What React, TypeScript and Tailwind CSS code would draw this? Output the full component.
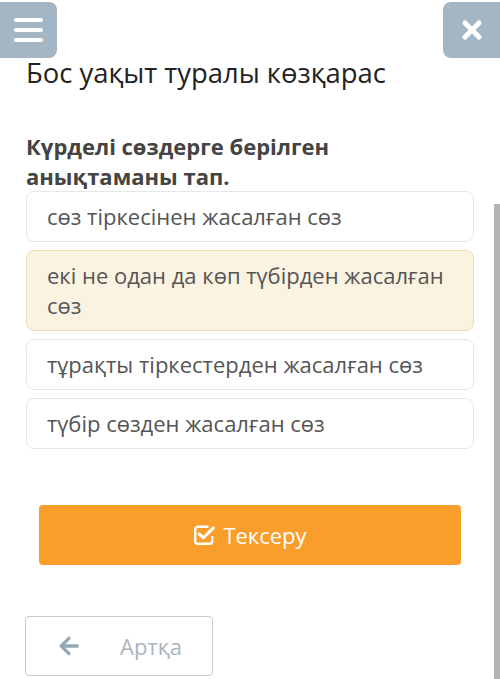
import { FaArrowLeft } from "react-icons/fa";

const options = [
    "сөз тіркесінен жасалған сөз",
    "екі не одан да көп түбірден жасалған сөз",
    "тұрақты тіркестерден жасалған сөз",
    "түбір сөзден жасалған сөз",
];

const selected = 1;

export default function App() {
    return (
        <main
            className="relative w-[500px] h-[679px] overflow-hidden bg-white"
            style={{ fontFamily: '"Open Sans", "Noto Sans", sans-serif' }}
        >
            <header className="flex justify-between pt-[2px]">
                <button className="w-[57px] h-[56px] rounded-r-lg bg-[#a4b6c4] flex flex-col items-center justify-center gap-[6px]">
                    <span className="block w-[29px] h-[4px] rounded-sm bg-white" />
                    <span className="block w-[29px] h-[4px] rounded-sm bg-white" />
                    <span className="block w-[29px] h-[4px] rounded-sm bg-white" />
                </button>
                <button className="w-[57px] h-[56px] rounded-l-lg bg-[#a4b6c4] flex items-center justify-center">
                    <svg width="20" height="20" viewBox="0 0 20 20">
                        <path
                            d="M3 3 L17 17 M17 3 L3 17"
                            stroke="white"
                            strokeWidth="5"
                            strokeLinecap="round"
                        />
                    </svg>
                </button>
            </header>

            <div className="px-[26px]">
                <h1 className="text-[27.4px] leading-[30px] text-[#222]">
                    Бос уақыт туралы көзқарас
                </h1>

                <h2 className="mt-[43px] text-[22px] leading-[30px] font-bold text-[#444]">
                    Күрделі сөздерге берілген
                    <br />
                    анықтаманы тап.
                </h2>

                <div className="flex flex-col gap-[8px]">
                    {options.map((opt, i) => (
                        <div
                            key={i}
                            className={`rounded-lg border px-[20px] pt-[9px] pb-[10px] text-[22px] leading-[30px] text-[#555] ${
                                i === selected
                                    ? "bg-[#fbf3e1] border-[#efdcae]"
                                    : "bg-white border-[#e4e8eb]"
                            }`}
                        >
                            {opt}
                        </div>
                    ))}
                </div>

                <button className="mt-[56px] ml-[13px] w-[422px] h-[60px] rounded bg-[#f99d2b] flex items-center justify-center gap-[8px] text-white text-[22px]">
                    <svg width="22" height="22" viewBox="0 0 20 20" fill="none">
                        <path
                            d="M14 2.5 H4.5 A2.5 2.5 0 0 0 2 5 V15.5 A2.5 2.5 0 0 0 4.5 18 H15 A2.5 2.5 0 0 0 17.5 15.5 V11"
                            stroke="white"
                            strokeWidth="2.2"
                        />
                        <path
                            d="M5.5 9 L9.5 12.5 L18.5 3.5"
                            stroke="white"
                            strokeWidth="2.8"
                            strokeLinecap="round"
                            strokeLinejoin="round"
                        />
                    </svg>
                    Тексеру
                </button>

                <button className="mt-[51px] -ml-[1px] w-[188px] h-[60px] rounded border border-[#c3ccd3] flex items-center text-[22px] text-[#a9b5bf]">
                    <FaArrowLeft className="ml-[32px] w-[22px] h-[22px] text-[#93a8b7]" />
                    <span className="ml-[40px]">Артқа</span>
                </button>
            </div>

            <div className="absolute right-0 top-[204px] bottom-0 w-[6px] bg-[#b3b3b3]" />
        </main>
    );
}
